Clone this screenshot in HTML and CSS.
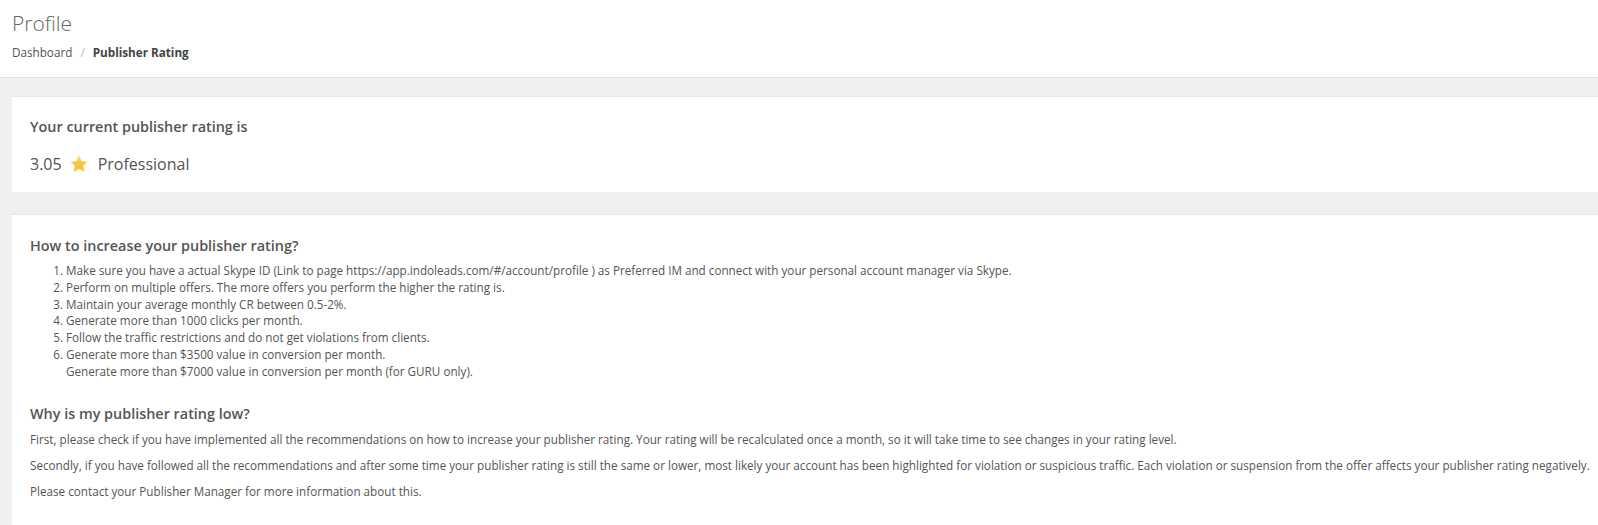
FILE: index.html
```
<!DOCTYPE html>
<html lang="en">
<head>
    <meta charset="UTF-8">
    <meta name="viewport" content="width=device-width, initial-scale=1.0">
    <title>Profile</title>
    <link rel="stylesheet" href="styles.css">
</head>
<body>
    <div class="page-header">
        <h1>Profile</h1>
        <div class="breadcrumb">
            <a href="#">Dashboard</a>
            <span class="sep">/</span>
            <span class="current">Publisher Rating</span>
        </div>
    </div>

    <div class="content">
        <!-- current rating -->
        <div class="card rating-card">
            <h4>Your current publisher rating is</h4>
            <div class="rating">
                <span>3.05</span>
                <svg class="star" viewBox="0 0 24 24" width="20" height="20">
                    <defs>
                        <linearGradient id="starFill" x1="0" y1="0" x2="0" y2="1">
                            <stop offset="0" stop-color="#fdd55b"/>
                            <stop offset="1" stop-color="#f6b82a"/>
                        </linearGradient>
                    </defs>
                    <path d="M12 1.8l3.1 6.6 7.1.9-5.2 4.9 1.3 7.1L12 17.8l-6.3 3.5 1.3-7.1-5.2-4.9 7.1-.9z" fill="url(#starFill)"/>
                </svg>
                <span>Professional</span>
            </div>
        </div>

        <!-- tips -->
        <div class="card info-card">
            <h3>How to increase your publisher rating?</h3>
            <ol>
                <li>Make sure you have a actual Skype ID (Link to page https://app.indoleads.com/#/account/profile ) as Preferred IM and connect with your personal account manager via Skype.</li>
                <li>Perform on multiple offers. The more offers you perform the higher the rating is.</li>
                <li>Maintain your average monthly CR between 0.5-2%.</li>
                <li>Generate more than 1000 clicks per month.</li>
                <li>Follow the traffic restrictions and do not get violations from clients.</li>
                <li>Generate more than $3500 value in conversion per month.<br>Generate more than $7000 value in conversion per month (for GURU only).</li>
            </ol>

            <h3>Why is my publisher rating low?</h3>
            <p>First, please check if you have implemented all the recommendations on how to increase your publisher rating. Your rating will be recalculated once a month, so it will take time to see changes in your rating level.</p>
            <p>Secondly, if you have followed all the recommendations and after some time your publisher rating is still the same or lower, most likely your account has been highlighted for violation or suspicious traffic. Each violation or suspension from the offer affects your publisher rating negatively.</p>
            <p>Please contact your Publisher Manager for more information about this.</p>
        </div>
    </div>
</body>
</html>
```

FILE: styles.css
```
body {
    margin: 0;
    font-family: "Open Sans", "Liberation Sans", sans-serif;
    background-color: #f0f0f0;
    color: #555;
    overflow: hidden;
}

/* 상단 헤더 */
.page-header {
    background-color: #fff;
    border-bottom: 1px solid #e3e3e3;
    padding: 9px 12px 0;
    height: 68px;
}

.page-header h1 {
    margin: 0;
    font-size: 21px;
    font-weight: 300;
    color: #666;
    line-height: 28px;
}

.breadcrumb {
    margin-top: 7px;
    font-size: 11.7px;
    line-height: 16px;
}

.breadcrumb a {
    color: #555;
    text-decoration: none;
}

.breadcrumb .sep {
    color: #bbb;
    margin: 0 5px;
}

.breadcrumb .current {
    font-weight: 700;
    color: #444;
}

.content {
    padding: 18px 0 0 12px;
}

/* 카드는 오른쪽 끝까지 이어짐 */
.card {
    background-color: #fff;
    border-top: 1px solid #e6e7ea;
    padding: 0 0 0 18px;
    margin-right: -20px;
}

.rating-card {
    height: 95px;
    margin-bottom: 22px;
}

.rating-card h4 {
    margin: 0;
    padding-top: 20px;
    font-size: 14.4px;
    font-weight: 600;
    line-height: 20px;
}

.rating {
    display: flex;
    align-items: center;
    margin-top: 16px;
    font-size: 16px;
    line-height: 22px;
}

.star {
    margin: 0 9px 0 7px;
}

.info-card {
    padding-top: 21px;
    padding-bottom: 20px;
    height: 300px;
}

.info-card h3 {
    margin: 0;
    font-size: 14.4px;
    font-weight: 600;
    line-height: 20px;
}

.info-card ol {
    margin: 6px 0 24px;
    padding-left: 36px;
    font-size: 11.7px;
    line-height: 16.8px;
}

.info-card p {
    margin: 7px 0 9px;
    font-size: 11.7px;
    line-height: 17px;
}

.info-card p + p {
    margin-top: 9px;
}
```
